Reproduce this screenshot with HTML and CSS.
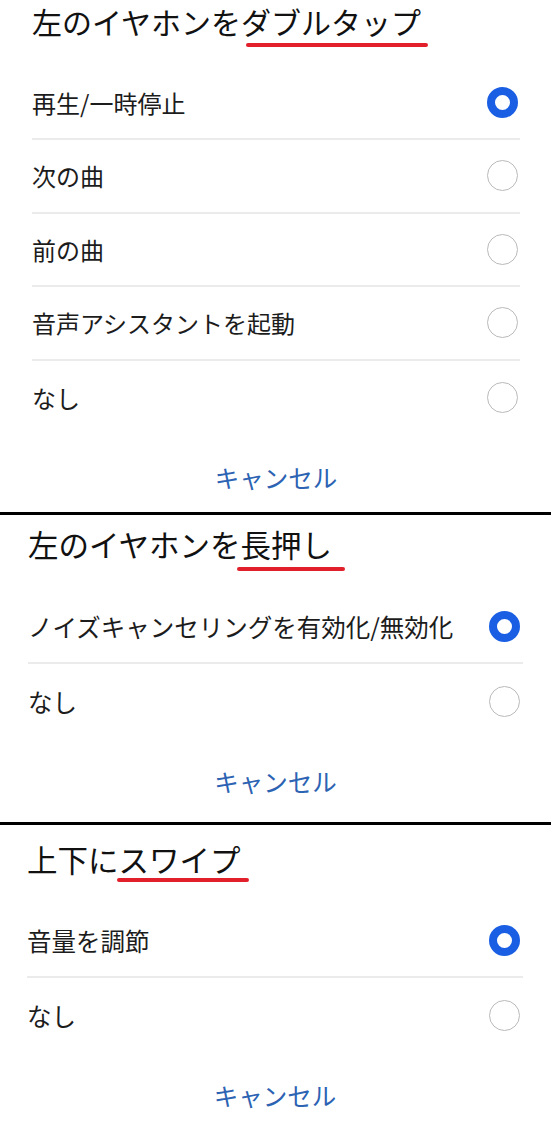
FILE: index.html
```html
<!DOCTYPE html>
<html lang="ja">
<head>
    <meta charset="UTF-8">
    <meta name="viewport" content="width=device-width, initial-scale=1.0">
    <title>イヤホン操作設定</title>
    <link rel="stylesheet" href="styles.css">
</head>
<body>
    <!-- Double tap -->
    <section class="sheet sheet-tap">
        <h2 class="sheet-title">左のイヤホンを<span class="mark">ダブルタップ</span></h2>
        <ul class="options">
            <li class="option"><span>再生/一時停止</span><span class="radio checked"></span></li>
            <li class="option"><span>次の曲</span><span class="radio"></span></li>
            <li class="option"><span>前の曲</span><span class="radio"></span></li>
            <li class="option"><span>音声アシスタントを起動</span><span class="radio"></span></li>
            <li class="option"><span>なし</span><span class="radio"></span></li>
        </ul>
        <div class="cancel">キャンセル</div>
    </section>

    <!-- Long press -->
    <section class="sheet sheet-hold">
        <h2 class="sheet-title">左のイヤホンを<span class="mark">長押し</span></h2>
        <ul class="options">
            <li class="option"><span>ノイズキャンセリングを有効化/無効化</span><span class="radio checked"></span></li>
            <li class="option"><span>なし</span><span class="radio"></span></li>
        </ul>
        <div class="cancel">キャンセル</div>
    </section>

    <!-- Swipe -->
    <section class="sheet sheet-swipe">
        <h2 class="sheet-title">上下に<span class="mark">スワイプ</span></h2>
        <ul class="options">
            <li class="option"><span>音量を調節</span><span class="radio checked"></span></li>
            <li class="option"><span>なし</span><span class="radio"></span></li>
        </ul>
        <div class="cancel">キャンセル</div>
    </section>
</body>
</html>
```

FILE: styles.css
```css
* {
    margin: 0;
    padding: 0;
    box-sizing: border-box;
}

body {
    width: 551px;
    height: 1137px;
    overflow: hidden;
    background: #fff;
    color: #1c1c1c;
    font-family: "Noto Sans CJK JP", "Noto Sans", sans-serif;
}

/* Sheets */
.sheet {
    background: #fff;
}

.sheet + .sheet {
    border-top: 3px solid #000;
}

.sheet-tap {
    height: 512px;
    padding: 0 31px 0 32px;
}

.sheet-hold {
    height: 310px;
    padding: 8px 28px 0 28px;
}

.sheet-swipe {
    height: 315px;
    padding: 13px 28px 0 27px;
}

/* Title */
.sheet-title {
    font-size: 30px;
    font-weight: 400;
    line-height: 42px;
    color: #111;
    margin-bottom: 24.5px;
}

.sheet-hold .sheet-title {
    font-size: 30.5px;
    margin-bottom: 25px;
}

.sheet-swipe .sheet-title {
    font-size: 30.5px;
    margin-bottom: 24px;
}

.mark {
    position: relative;
    display: inline-block;
}

.mark::after {
    content: "";
    position: absolute;
    top: 43px;
    left: 5px;
    right: -7px;
    height: 4px;
    border-radius: 2px;
    background: #e2202c;
}

.sheet-hold .mark::after {
    top: 44px;
    left: -4px;
    right: -13px;
}

.sheet-swipe .mark::after {
    top: 40px;
    left: -2px;
    right: -8px;
}

/* Options */
.options {
    list-style: none;
}

.option {
    display: flex;
    align-items: center;
    justify-content: space-between;
    height: 74px;
    padding-right: 3px;
    font-size: 24.5px;
    border-bottom: 2px solid #ebebeb;
}

.sheet-tap .option {
    height: 73.5px;
    font-size: 24px;
    padding-right: 2px;
}

.option:last-child {
    border-bottom: none;
}

.radio {
    width: 31px;
    height: 31px;
    flex-shrink: 0;
    border-radius: 50%;
    border: 1.5px solid #bababa;
}

.radio.checked {
    border: 8px solid #1a5fe3;
}

/* Cancel */
.cancel {
    padding-top: 20px;
    line-height: 48px;
    font-size: 24.5px;
    text-align: center;
    color: #2c63b3;
}
```
